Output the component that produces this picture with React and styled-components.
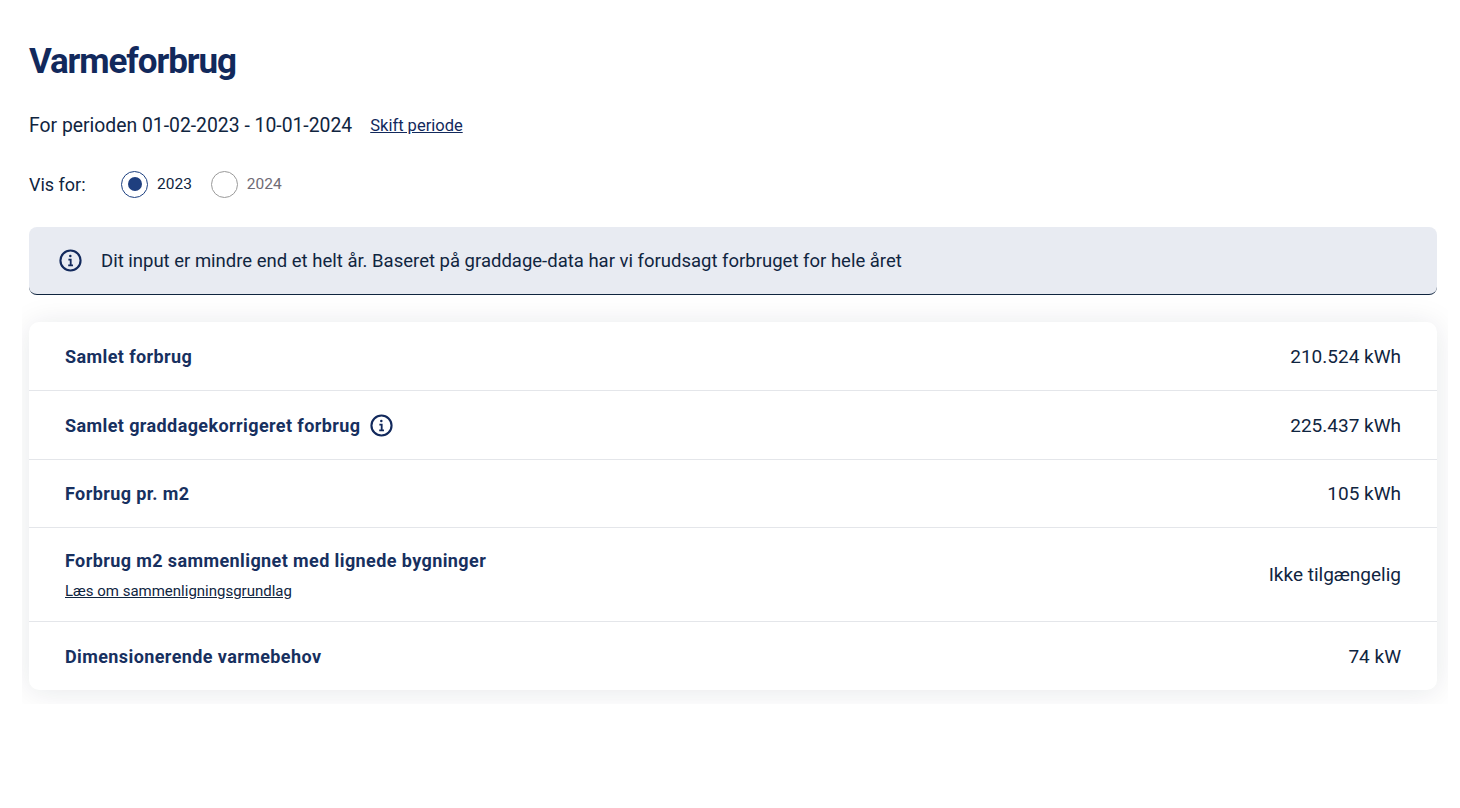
import React from 'react';
import styled, { createGlobalStyle } from 'styled-components';

const GlobalStyle = createGlobalStyle`
  html, body {
    margin: 0;
    padding: 0;
    background: #fff;
    font-family: 'Roboto', 'Liberation Sans', sans-serif;
    color: #10253f;
  }
`;

const Page = styled.div`
  padding: 40px 23px 0 29px;
`;

const Title = styled.h1`
  margin: 0;
  font-size: 35px;
  line-height: 44px;
  font-weight: 700;
  color: #12295c;
  letter-spacing: -1.1px;
`;

const PeriodRow = styled.div`
  display: flex;
  align-items: center;
  gap: 18px;
  margin-top: 28px;
  height: 26px;
  font-size: 19.35px;
`;

const PeriodLink = styled.a`
  font-size: 16.5px;
  color: #12295c;
  text-decoration: underline;
`;

const FilterRow = styled.div`
  display: flex;
  align-items: center;
  margin-top: 32px;
  height: 28px;
  font-size: 18px;
`;

const FilterLabel = styled.span`
  width: 92px;
`;

const RadioLabel = styled.label`
  display: flex;
  align-items: center;
  gap: 9px;
  margin-right: 19px;
  font-size: 15.5px;
  color: ${(p) => (p.$checked ? '#10253f' : '#6f6b75')};
`;

const RadioCircle = styled.span`
  box-sizing: border-box;
  width: 27px;
  height: 27px;
  border-radius: 50%;
  border: ${(p) => (p.$checked ? '1.5px solid #1c3f80' : '1px solid #9a9a9a')};
  display: flex;
  align-items: center;
  justify-content: center;
  &::after {
    content: '';
    display: ${(p) => (p.$checked ? 'block' : 'none')};
    width: 14px;
    height: 14px;
    border-radius: 50%;
    background: #1f3f7f;
  }
`;

const Notice = styled.div`
  box-sizing: border-box;
  display: flex;
  align-items: center;
  gap: 19px;
  margin-top: 29px;
  height: 68px;
  padding-left: 30px;
  background: #e8ebf2;
  border-bottom: 1px solid #10253f;
  border-radius: 8px;
  font-size: 18.5px;
`;

const CardClip = styled.div`
  margin: 0 -11px 0 -7px;
  padding: 27px 11px 14px 7px;
  overflow: hidden;
`;

const Card = styled.div`
  background: #fff;
  border-radius: 10px;
  box-shadow: 0 2px 30px rgba(20, 30, 50, 0.1);
`;

const Row = styled.div`
  box-sizing: border-box;
  display: flex;
  align-items: center;
  justify-content: space-between;
  height: ${(p) => p.$height}px;
  padding: 0 36px;
  border-bottom: ${(p) => (p.$last ? 'none' : '1px solid #e4e6ea')};
`;

const RowLabel = styled.div`
  display: flex;
  align-items: center;
  gap: 10px;
  font-size: 18px;
  font-weight: 700;
  letter-spacing: 0.4px;
  color: #17305f;
`;

const RowValue = styled.div`
  font-size: 19px;
  color: #10253f;
`;

const SubLink = styled.a`
  display: block;
  margin-top: 11px;
  font-size: 15px;
  color: #10253f;
  text-decoration: underline;
`;

const InfoIcon = ({ size = 23 }) => (
  <svg width={size} height={size} viewBox="0 0 24 24" fill="none" stroke="#12295c" strokeWidth="2.2">
    <circle cx="12" cy="12" r="10.5" />
    <path d="M9.8 11h2.4v6M9.6 17h5" strokeWidth="1.9" />
    <circle cx="11.8" cy="7.4" r="1.3" fill="#12295c" stroke="none" />
  </svg>
);

export default function App() {
  return (
    <Page>
      <GlobalStyle />
      <Title>Varmeforbrug</Title>
      <PeriodRow>
        <span>For perioden 01-02-2023 - 10-01-2024</span>
        <PeriodLink>Skift periode</PeriodLink>
      </PeriodRow>
      <FilterRow>
        <FilterLabel>Vis for:</FilterLabel>
        <RadioLabel $checked>
          <RadioCircle $checked />
          2023
        </RadioLabel>
        <RadioLabel>
          <RadioCircle />
          2024
        </RadioLabel>
      </FilterRow>
      <Notice>
        <InfoIcon />
        <span>Dit input er mindre end et helt år. Baseret på graddage-data har vi forudsagt forbruget for hele året</span>
      </Notice>
      <CardClip>
        <Card>
          <Row $height={69}>
            <RowLabel>Samlet forbrug</RowLabel>
            <RowValue>210.524 kWh</RowValue>
          </Row>
          <Row $height={69}>
            <RowLabel>
              Samlet graddagekorrigeret forbrug
              <InfoIcon />
            </RowLabel>
            <RowValue>225.437 kWh</RowValue>
          </Row>
          <Row $height={68}>
            <RowLabel>Forbrug pr. m2</RowLabel>
            <RowValue>105 kWh</RowValue>
          </Row>
          <Row $height={94}>
            <div>
              <RowLabel>Forbrug m2 sammenlignet med lignede bygninger</RowLabel>
              <SubLink>Læs om sammenligningsgrundlag</SubLink>
            </div>
            <RowValue>Ikke tilgængelig</RowValue>
          </Row>
          <Row $height={68} $last>
            <RowLabel>Dimensionerende varmebehov</RowLabel>
            <RowValue>74 kW</RowValue>
          </Row>
        </Card>
      </CardClip>
    </Page>
  );
}
